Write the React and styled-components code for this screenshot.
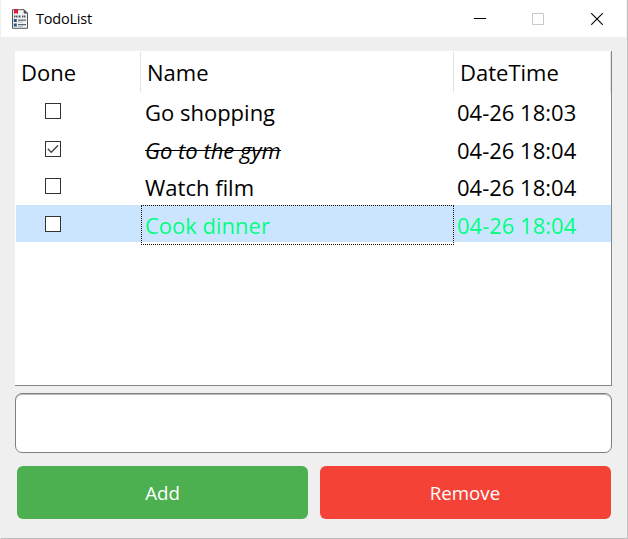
import React from "react";
import styled, { createGlobalStyle, css } from "styled-components";

const Global = createGlobalStyle`
  * { box-sizing: border-box; }
  body { margin: 0; background: #efefef; font-family: "Open Sans", "Noto Sans", sans-serif; }
`;

const Window = styled.main`
  position: relative;
  display: flex;
  flex-direction: column;
  width: 628px;
  height: 539px;
  overflow: hidden;
  background: #efefef;
  border-left: 1px solid #efefef;
  border-right: 1px solid #c3c3c3;
  border-bottom: 1px solid #bdbdbd;
`;

const TitleBar = styled.header`
  display: flex;
  align-items: center;
  flex: none;
  height: 37px;
  margin-right: 1px;
  padding-left: 10px;
  background: #fff;
`;

const Title = styled.h1`
  flex: 1;
  margin: 0 0 0 7px;
  font-size: 14.5px;
  line-height: 37px;
  font-weight: 400;
  letter-spacing: -0.22px;
  color: #000;
`;

const Caption = styled.button`
  display: grid;
  place-items: center;
  width: 58.5px;
  height: 37px;
  padding: 0;
  border: 0;
  background: none;
  color: ${(p) => (p.$dim ? "#c8c8c8" : "#000")};
`;

const Content = styled.div`
  display: flex;
  flex-direction: column;
  padding: 14px 15px 0 14px;
`;

const Table = styled.section`
  width: 597px;
  height: 335px;
  background: #fff;
  border-right: 1px solid #828790;
  border-bottom: 1px solid #828790;
`;

const Columns = styled.div`
  display: grid;
  grid-template-columns: 126px 313px 157px;
`;

const HeaderRow = styled(Columns)`
  height: 41px;
  padding-top: 1px;
`;

const HeaderCell = styled.div`
  height: 40px;
  padding-left: 6px;
  border-right: 1px solid #e2e2e2;
  white-space: nowrap;
`;

const Label = styled.span`
  display: inline-block;
  transform-origin: 0 50%;
  transform: scaleX(${(p) => p.$stretch || 1});
  font-size: 22px;
  line-height: ${(p) => p.$line || 38}px;
  font-weight: 500;
  white-space: nowrap;
  ${(p) => p.$done && css`
    font-style: italic;
    background: linear-gradient(#000, #000) 0 19px / 100% 1px no-repeat;
  `}
`;

const Row = styled(Columns)`
  height: ${(p) => p.$height}px;
  color: ${(p) => (p.$selected ? "#00ff7f" : "#000")};
  background: ${(p) => (p.$selected ? "#cce5ff" : "#fff")};
  box-shadow: inset 1px 0 #fff;
`;

const CheckCell = styled.div`
  padding: 11px 0 0 30px;
`;

const CheckBox = styled.div`
  display: grid;
  place-items: center;
  width: 16px;
  height: 16px;
  border: 1px solid #333;
  background: #fff;
`;

const NameCell = styled.div`
  height: 100%;
  padding-left: 3px;
  border: 1px ${(p) => (p.$focus ? "dotted #201000" : "solid transparent")};
`;

const DateCell = styled.div`
  padding: 1px 0 0 3px;
`;

const Entry = styled.input`
  width: 597px;
  height: 60px;
  margin-top: 7px;
  padding: 0 12px;
  border: 1px solid #808080;
  border-radius: 7px;
  outline: none;
  background: #fff;
  box-shadow: inset 0 1px #b8b8b8;
  font: 500 20px "Open Sans", sans-serif;
`;

const Actions = styled.div`
  display: grid;
  grid-template-columns: 291px 291px;
  column-gap: 11.5px;
  padding: 12.5px 0 0 2px;
`;

const Action = styled.button`
  height: 53px;
  padding: 2px 0 0;
  border: 0;
  border-radius: 6px;
  background: ${(p) => p.$color};
  color: #fff;
  font: 500 18.7px/50px "Open Sans", "Noto Sans", sans-serif;
  letter-spacing: ${(p) => p.$tracking || 0}px;
`;

const EdgeMark = styled.i`
  position: absolute;
  left: -1px;
  top: ${(p) => p.$top}px;
  width: 1px;
  height: ${(p) => p.$height}px;
  background: ${(p) => p.$color};
`;

const ListIcon = () => (
  <svg width="18" height="20" viewBox="0 0 18 20" shapeRendering="geometricPrecision">
    <path d="M1.5 .7H13l3.5 3.5v15.1h-15z" fill="#f1f3f4" stroke="#555" />
    <path d="M13 .7v3.5h3.5z" fill="#555" stroke="#555" strokeWidth=".6" />
    <path d="M3 0h4v5l-2-1-2 1z" fill="#d92036" />
    <path d="M3 7.5h3.5M7.5 7.5H10M11 7.5h4" stroke="#555" strokeWidth="2" strokeDasharray="1.5 .5" />
    <path d="M2.8 10h3v3h-3zM2.8 14.5h3v3h-3z" fill="#245486" />
    <path d="M7 11.2h8M7 15.6h8" stroke="#606466" strokeWidth="1.3" />
    <path d="M7 13h5M7 17.4h5" stroke="#b4b8ba" />
  </svg>
);

const items = [
  { name: "Go shopping", date: "04-26 18:03", height: 38, stretch: 1 },
  { name: "Go to the gym", date: "04-26 18:04", height: 37, done: true, stretch: 1 },
  { name: "Watch film", date: "04-26 18:04", height: 38, stretch: 1 },
  { name: "Cook dinner", date: "04-26 18:04", height: 37, selected: true, stretch: 1 },
];

export default function App() {
  return (
    <>
      <Global />
      <Window>
        <TitleBar>
          <ListIcon />
          <Title>TodoList</Title>
          <Caption aria-label="Minimize">
            <svg width="12" height="12"><path d="M0 5.5h12" stroke="currentColor" /></svg>
          </Caption>
          <Caption aria-label="Maximize" $dim>
            <svg width="12" height="12"><path d="M.5 .5h11v11H.5z" fill="none" stroke="currentColor" /></svg>
          </Caption>
          <Caption aria-label="Close">
            <svg width="12" height="12"><path d="M.2 .2l11.6 11.6M11.8 .2L.2 11.8" stroke="currentColor" strokeWidth="1.1" /></svg>
          </Caption>
        </TitleBar>
        <Content>
          <Table>
            <HeaderRow>
              <HeaderCell><Label $line={41}>Done</Label></HeaderCell>
              <HeaderCell><Label $line={41}>Name</Label></HeaderCell>
              <HeaderCell><Label $line={41}>DateTime</Label></HeaderCell>
            </HeaderRow>
            {items.map((item) => (
              <Row key={item.name} $height={item.height} $selected={item.selected}>
                <CheckCell>
                  <CheckBox>
                    {item.done && (
                      <svg width="12" height="10"><path d="M.8 4.8l3.4 3.4L11 1.4" fill="none" stroke="#444" strokeWidth="1.4" /></svg>
                    )}
                  </CheckBox>
                </CheckCell>
                <NameCell $focus={item.selected}>
                  <Label $done={item.done} $stretch={item.stretch}>{item.name}</Label>
                </NameCell>
                <DateCell><Label>{item.date}</Label></DateCell>
              </Row>
            ))}
          </Table>
          <Entry aria-label="New task" />
          <Actions>
            <Action $color="#4caf50">Add</Action>
            <Action $color="#f44336">Remove</Action>
          </Actions>
        </Content>
        <EdgeMark $top={67} $height={2} $color="#888" />
        <EdgeMark $top={75} $height={2} $color="#555" />
        <EdgeMark $top={351} $height={1} $color="#bbb" />
      </Window>
    </>
  );
}
